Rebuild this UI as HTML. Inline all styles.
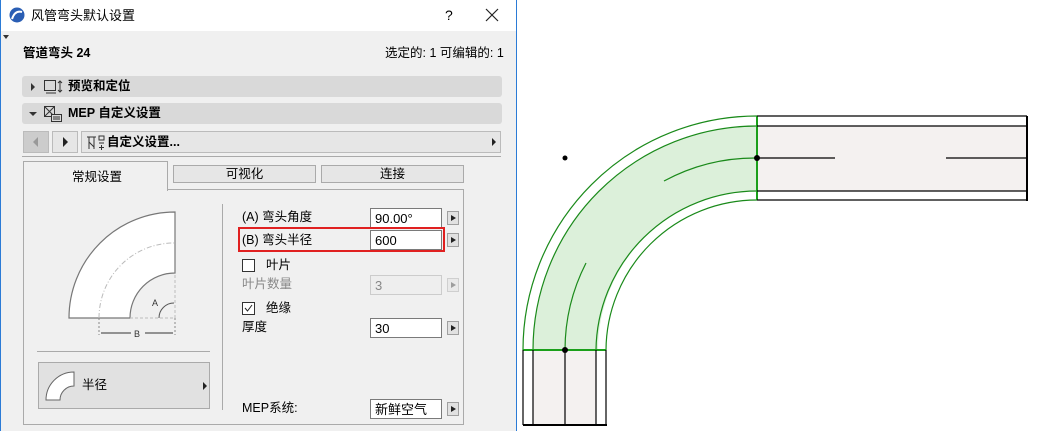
<!DOCTYPE html>
<html><head><meta charset="utf-8"><style>
*{box-sizing:border-box;margin:0;padding:0}
body{width:1041px;height:431px;background:#fff;position:relative;overflow:hidden;font-family:"Liberation Sans","Noto Sans CJK SC",sans-serif;font-size:12px;color:#000;line-height:15px}
.a{position:absolute}
.dlg{left:0;top:0;width:517px;height:431px;background:#f0f0f0;border-left:1px solid #2b7bd6;border-right:1px solid #2b7bd6}
.bar{background:#d9d9d9;border-radius:3px;height:21px;font-weight:bold;font-size:12.5px}
.inp{background:#fff;border:1px solid #7a7a7a;height:20px;padding:2px 4px;font-size:13px;line-height:15px}
.ab{width:12px;height:14px;border:1px solid #a0a0a0;background:#e1e1e1}
.ab:after{content:"";position:absolute;left:3px;top:3px;border-left:5px solid #222;border-top:3.5px solid transparent;border-bottom:3.5px solid transparent}
.lb{font-size:12.5px}
</style></head><body>
<div class="a dlg">
 <div class="a" style="left:0;top:0;width:515px;height:31px;background:#fff"></div>
 <svg class="a" style="left:8px;top:7px" width="16" height="16"><circle cx="8" cy="8" r="7.5" fill="#2a5eb4"/><path d="M3 12 Q6 3 13 5" stroke="#fff" stroke-width="2" fill="none"/></svg>
 <div class="a" style="left:30px;top:8px;font-size:13px">风管弯头默认设置</div>
 <div class="a" style="left:444px;top:8px;font-size:14px">?</div>
 <svg class="a" style="left:484px;top:8px" width="14" height="14"><path d="M1 1L13 13M13 1L1 13" stroke="#222" stroke-width="1.2"/></svg>
 <div class="a" style="left:2px;top:35px;border-top:4px solid #333;border-left:3px solid transparent;border-right:3px solid transparent"></div>
 <div class="a" style="left:22px;top:46px;font-weight:bold;font-size:12.5px">管道弯头 24</div>
 <div class="a" style="left:384px;top:46px;font-size:12.5px">选定的: 1 可编辑的: 1</div>
 <div class="a bar" style="left:21px;top:76px;width:480px"><span class="a" style="left:9px;top:7px;border-left:4px solid #333;border-top:4px solid transparent;border-bottom:4px solid transparent"></span>
  <svg class="a" style="left:21px;top:3px" width="20" height="16"><rect x="1.5" y="1.5" width="11" height="10" fill="none" stroke="#333"/><path d="M3 14H13M17 2V13M15 4L17 2L19 4M15 11L17 13L19 11" stroke="#333" fill="none"/></svg>
  <span class="a" style="left:46px;top:3px">预览和定位</span></div>
 <div class="a bar" style="left:21px;top:103px;width:480px"><span class="a" style="left:7px;top:9px;border-top:4px solid #333;border-left:4px solid transparent;border-right:4px solid transparent"></span>
  <svg class="a" style="left:21px;top:2px" width="20" height="18"><rect x="1.5" y="1.5" width="10" height="10" fill="none" stroke="#333"/><path d="M2 2L11 11M11 2L2 11" stroke="#333"/><rect x="8.5" y="9.5" width="10" height="7" fill="#d9d9d9" stroke="#333"/><path d="M10 12H17M10 14H17" stroke="#333"/></svg>
  <span class="a" style="left:46px;top:3px">MEP 自定义设置</span></div>
 <div class="a" style="left:22px;top:131px;width:26px;height:22px;background:#ccc;border:1px solid #bbb"><span class="a" style="left:9px;top:5px;border-right:5px solid #999;border-top:5px solid transparent;border-bottom:5px solid transparent"></span></div>
 <div class="a" style="left:51px;top:131px;width:26px;height:22px;background:#e6e6e6;border:1px solid #bbb"><span class="a" style="left:10px;top:5px;border-left:5px solid #222;border-top:5px solid transparent;border-bottom:5px solid transparent"></span></div>
 <div class="a" style="left:80px;top:131px;width:420px;height:22px;background:#e6e6e6;border:1px solid #bbb">
  <svg class="a" style="left:4px;top:2px" width="20" height="17"><path d="M1 3H10M3 3V15M8 3V15M3 8L8 13M13 2H18V6H13ZM13 9H18M15.5 11V16M13 13.5H18" stroke="#333" fill="none"/></svg>
  <span class="a" style="left:25px;top:3px;font-weight:bold;font-size:12.5px">自定义设置...</span><span class="a" style="left:410px;top:6px;border-left:4px solid #222;border-top:4px solid transparent;border-bottom:4px solid transparent"></span></div>
 <div class="a" style="left:21px;top:156px;width:479px;height:1px;background:#aaa"></div>
 <div class="a" style="left:22px;top:189px;width:441px;height:236px;border:1px solid #aaa"></div>
 <div class="a" style="left:22px;top:161px;width:145px;height:30px;border:1px solid #aaa;border-bottom:none;background:#f0f0f0"><span class="a" style="left:48px;top:8px;font-size:12.5px">常规设置</span></div>
 <div class="a" style="left:172px;top:165px;width:143px;height:18px;border:1px solid #aaa;background:#e6e6e6;text-align:center;font-size:12.5px;line-height:16px">可视化</div>
 <div class="a" style="left:320px;top:165px;width:143px;height:18px;border:1px solid #aaa;background:#e6e6e6;text-align:center;font-size:12.5px;line-height:16px">连接</div>
 <svg class="a" style="left:60px;top:205px" width="130" height="140">
  <path d="M8 113 A106 106 0 0 1 114 7 L114 68 A45 45 0 0 0 69 113 Z" fill="#fff" stroke="#777" stroke-width="1.2"/>
  <path d="M38 113 A75 75 0 0 1 113 38" fill="none" stroke="#bbb" stroke-dasharray="5 2 1 2"/>
  <path d="M69 113 L114 113 L114 68" fill="none" stroke="#bbb" stroke-dasharray="3 2"/>
  <path d="M98 113 A15 15 0 0 1 113 98" fill="none" stroke="#555"/>
  <text x="91" y="101" font-size="9" fill="#333" font-family="Liberation Sans">A</text>
  <path d="M38 113 V130 M114 113 V130" stroke="#888" stroke-dasharray="2 2"/>
  <path d="M40 128 H70 M84 128 H112" stroke="#333"/>
  <text x="73" y="132" font-size="9" fill="#333" font-family="Liberation Sans">B</text>
 </svg>
 <div class="a" style="left:36px;top:351px;width:173px;height:1px;background:#aaa"></div>
 <div class="a" style="left:37px;top:362px;width:172px;height:47px;background:#e1e1e1;border:1px solid #aaa">
  <svg class="a" style="left:6px;top:8px" width="36" height="32"><path d="M1 29 A28 28 0 0 1 29 1 L29 15 A14 14 0 0 0 15 29 Z" fill="#fff" stroke="#666"/></svg>
  <span class="a" style="left:43px;top:15px;font-size:12.5px">半径</span>
  <span class="a" style="left:164px;top:19px;border-left:4px solid #222;border-top:4px solid transparent;border-bottom:4px solid transparent"></span>
 </div>
 <div class="a" style="left:221px;top:204px;width:1px;height:206px;background:#aaa"></div>
 <div class="a lb" style="left:241px;top:210px">(A) 弯头角度</div>
 <div class="a inp" style="left:369px;top:208px;width:72px">90.00°</div>
 <div class="a ab" style="left:446px;top:211px"></div>
 <div class="a" style="left:237px;top:227px;width:207px;height:25px;border:2px solid #e02020"></div>
 <div class="a lb" style="left:241px;top:233px">(B) 弯头半径</div>
 <div class="a inp" style="left:369px;top:230px;width:72px">600</div>
 <div class="a ab" style="left:446px;top:233px"></div>
 <div class="a" style="left:241px;top:259px;width:13px;height:13px;border:1px solid #333;background:#fff"></div>
 <div class="a lb" style="left:265px;top:258px">叶片</div>
 <div class="a lb" style="left:241px;top:277px;color:#888">叶片数量</div>
 <div class="a inp" style="left:369px;top:275px;width:72px;background:#eee;border-color:#ccc;color:#888">3</div>
 <div class="a ab" style="left:446px;top:278px;opacity:.4"></div>
 <svg class="a" style="left:241px;top:302px" width="14" height="14"><rect x="0.5" y="0.5" width="12" height="12" fill="#fff" stroke="#333"/><path d="M3 6L5.5 9L10 3" stroke="#222" fill="none"/></svg>
 <div class="a lb" style="left:265px;top:301px">绝缘</div>
 <div class="a lb" style="left:241px;top:320px">厚度</div>
 <div class="a inp" style="left:369px;top:318px;width:72px">30</div>
 <div class="a ab" style="left:446px;top:321px"></div>
 <div class="a lb" style="left:241px;top:401px">MEP系统:</div>
 <div class="a inp" style="left:369px;top:399px;width:72px">新鲜空气</div>
 <div class="a ab" style="left:446px;top:402px"></div>
</div>
<svg class="a" style="left:0;top:0" width="1041" height="431">
 <rect x="757" y="126" width="270" height="65" fill="#f4f1f0"/>
 <rect x="533" y="350" width="63" height="75" fill="#f4f1f0"/>
 <path d="M523 350 A234 234 0 0 1 757 116 L757 200 A151 151 0 0 0 606 350 Z" fill="#fff"/>
 <path d="M533 350 A224 224 0 0 1 757 126 L757 191 A159 159 0 0 0 598 350 Z" fill="#dcf0da"/>
 <g fill="none" stroke="#1a8a1a" stroke-width="1.2">
  <path d="M523 350 A234 234 0 0 1 757 116"/>
  <path d="M533 350 A224 224 0 0 1 757 126"/>
  <path d="M606 350 A151 151 0 0 1 757 200"/>
  <path d="M596 350 A161 161 0 0 1 757 191"/>
  <path d="M565 350 A192 192 0 0 1 586 263"/>
  <path d="M664 181 A192 192 0 0 1 757 158"/>
 </g>
 <path d="M523 350 H606 M757 116 V200" stroke="#1aa01a" stroke-width="2"/>
 <g stroke="#000" stroke-width="1.2" fill="none">
  <path d="M757 116 H1027 M757 126 H1027 M757 191 H1027 M757 200 H1027"/>
  <path d="M1027 116 V201" stroke-width="2"/>
  <path d="M757 158 H835 M946 158 H1027"/>
  <path d="M523 350 V425 M533 350 V425 M565 350 V425 M596 350 V425 M606 350 V425"/>
  <path d="M523 425 H607" stroke-width="2"/>
 </g>
 <circle cx="565" cy="158" r="2.5"/><circle cx="757" cy="158" r="3"/><circle cx="565" cy="350" r="3"/>
</svg>
</body></html>
